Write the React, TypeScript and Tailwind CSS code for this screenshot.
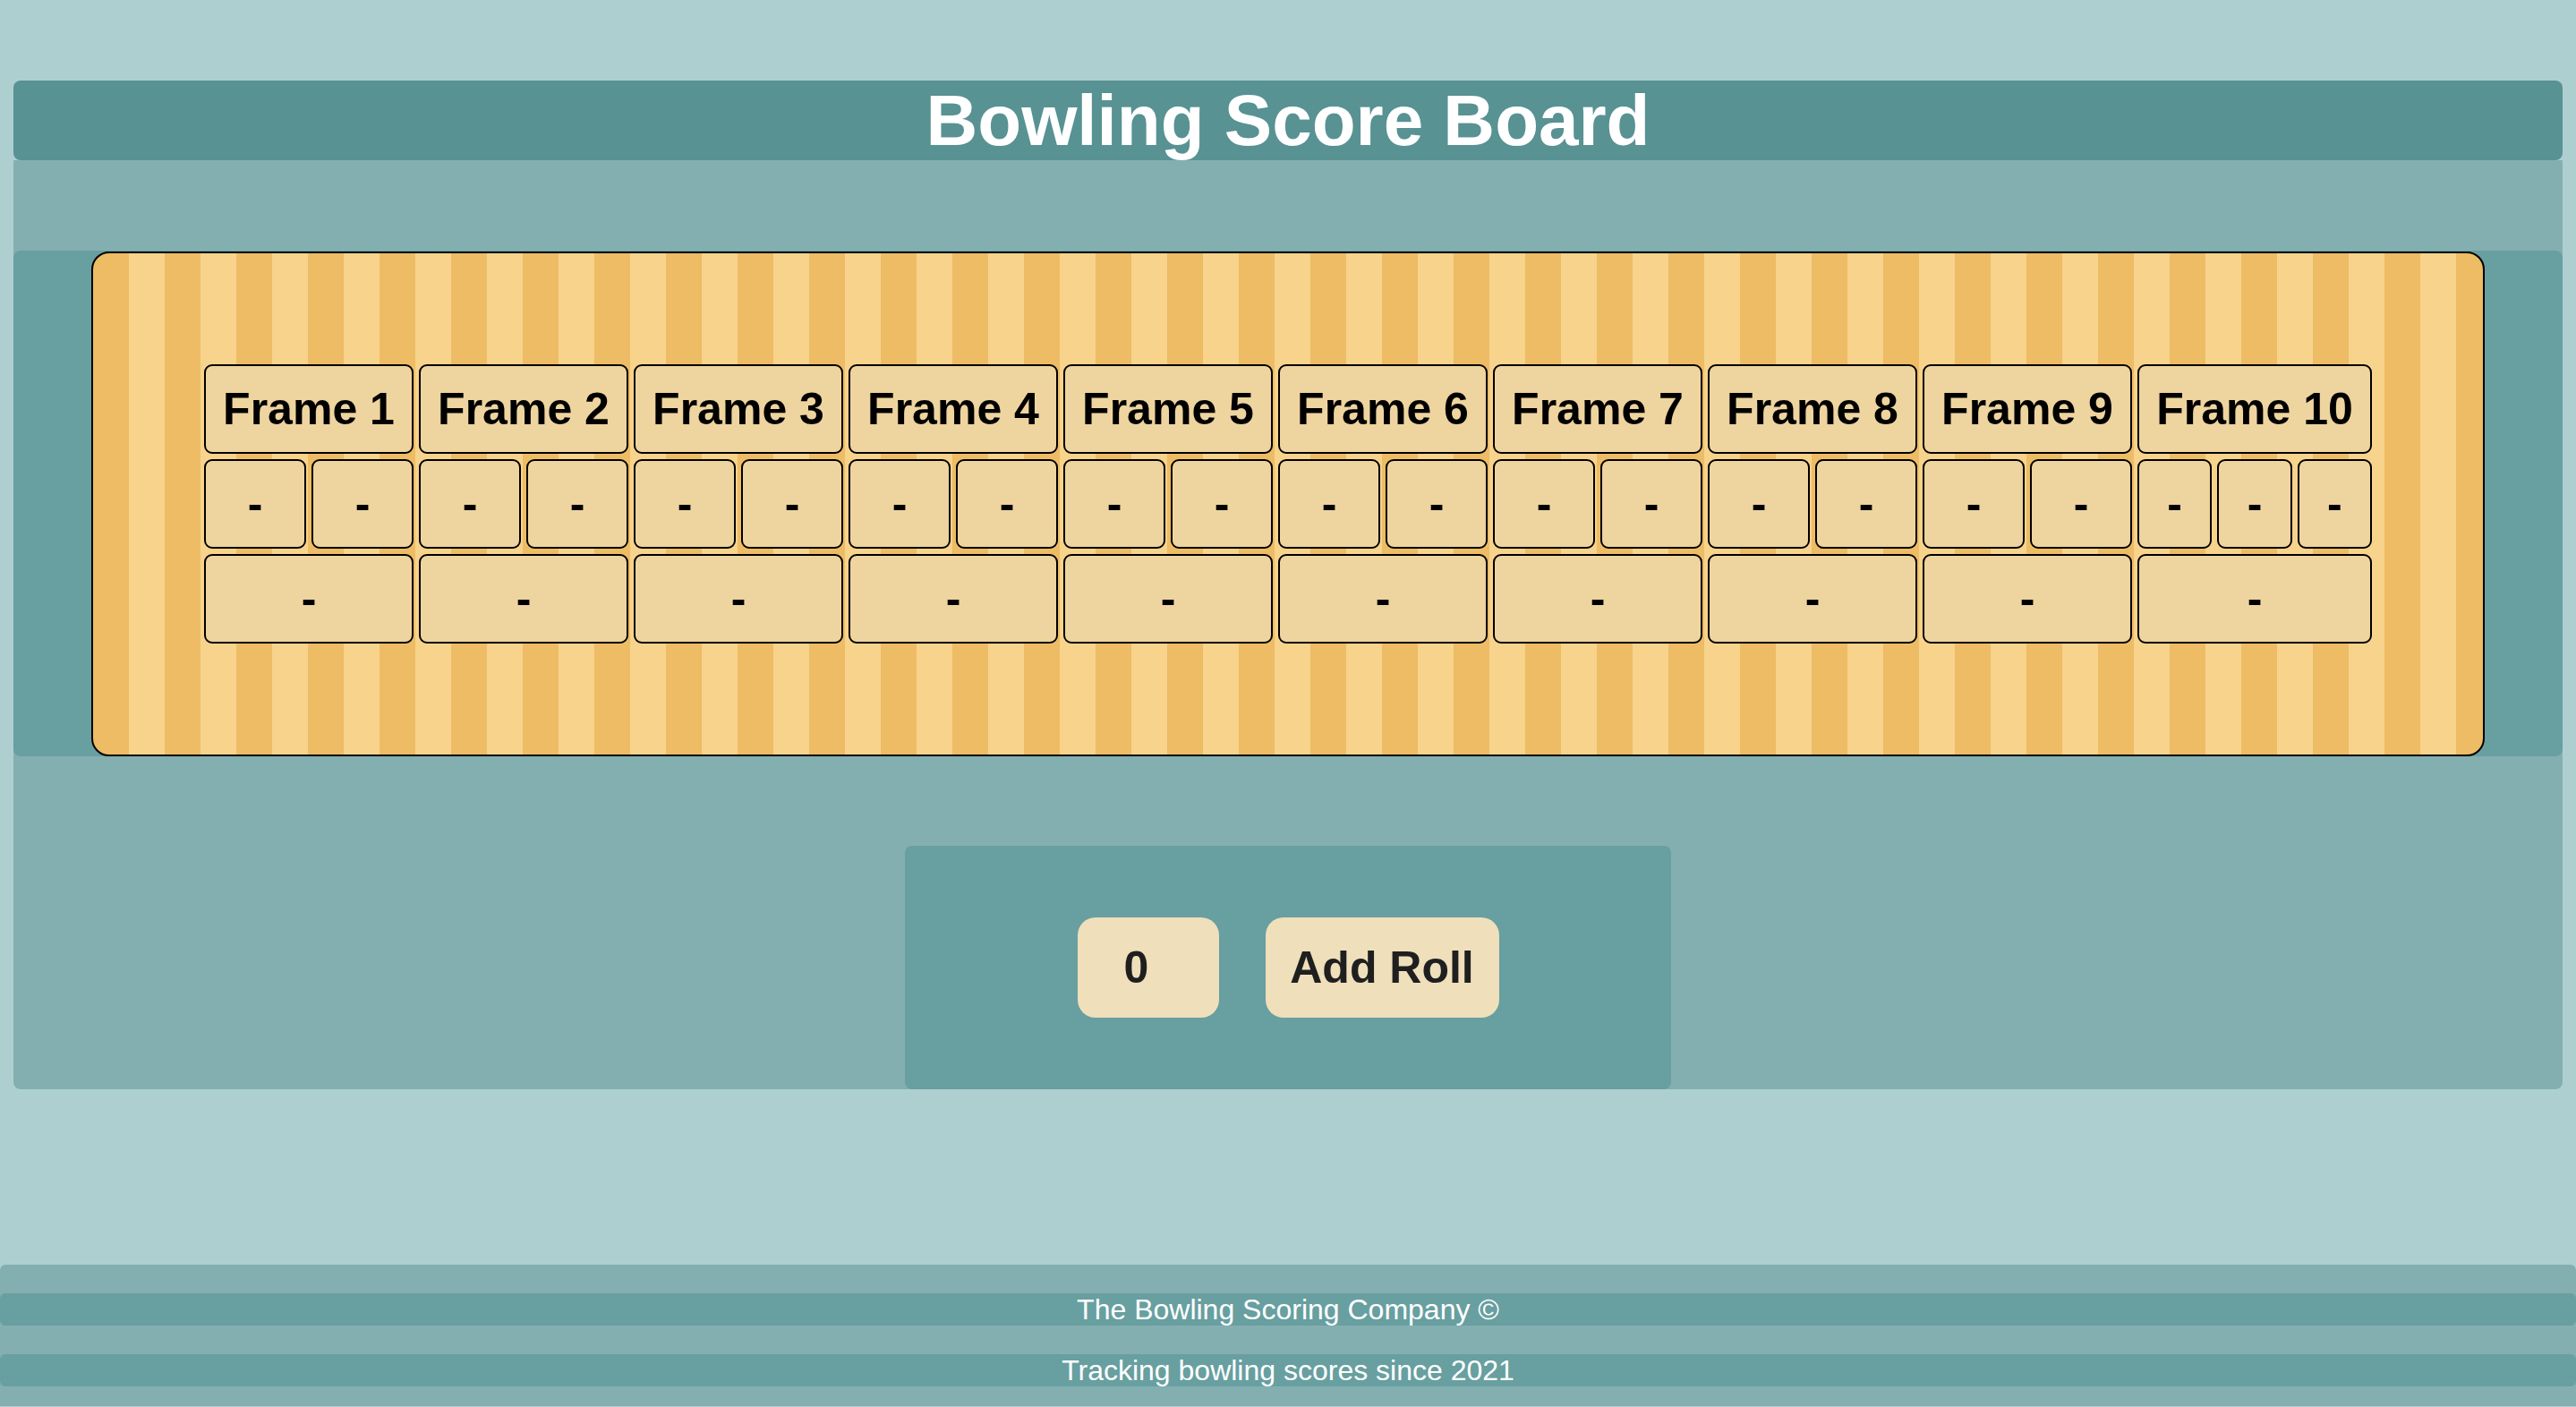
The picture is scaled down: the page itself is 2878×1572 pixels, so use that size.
import React from 'react'

const frames = Array.from({ length: 10 }, (_, i) => i + 1)

const cell =
  'flex h-[100px] items-center justify-center rounded-[9px] border-2 border-black bg-[#eed49f] text-[50px] font-bold leading-none text-black'

function Frame({ n }: { n: number }) {
  const rolls = n === 10 ? 3 : 2
  return (
    <div className={`flex flex-col gap-[6px] ${n === 10 ? 'w-[262px]' : 'w-[234px]'}`}>
      <div className={cell}>Frame {n}</div>
      <div className="flex gap-[6px]">
        {Array.from({ length: rolls }).map((_, i) => (
          <div key={i} className={`${cell} flex-1`}>
            -
          </div>
        ))}
      </div>
      <div className={cell}>-</div>
    </div>
  )
}

export default function App() {
  return (
    <div className="min-h-screen bg-[#aecfd0] pt-[90px] font-['Liberation_Sans',Arial,sans-serif]">
      <header className="mx-[15px] flex h-[89px] items-center justify-center rounded-lg bg-[#589293]">
        <h1 className="text-[80px] font-bold leading-none text-white">Bowling Score Board</h1>
      </header>

      <main className="mx-[15px] flex flex-col items-center gap-[100px] rounded-b-lg bg-[#84afb1] pt-[101px]">
        <section className="flex w-full justify-center rounded-lg bg-[#689fa0]">
          <div className="mt-[1px] rounded-[20px] border-2 border-black bg-[image:repeating-linear-gradient(90deg,#edbc65_0,#edbc65_40px,#f7d38c_40px,#f7d38c_80px)] p-[124px]">
            <div className="flex gap-[6px]">
              {frames.map((n) => (
                <Frame key={n} n={n} />
              ))}
            </div>
          </div>
        </section>

        <div className="flex w-[856px] items-center justify-center gap-[52px] rounded-lg bg-[#689fa0] py-[80px]">
          <input
            type="number"
            defaultValue={0}
            className="h-[112px] w-[158px] rounded-[20px] bg-[#efdfbb] pl-[52px] text-[50px] font-bold text-[#1f1f1f] outline-none [appearance:textfield] [&::-webkit-inner-spin-button]:appearance-none [&::-webkit-outer-spin-button]:appearance-none"
          />
          <button className="h-[112px] w-[261px] rounded-[20px] bg-[#efdfbb] text-[50px] font-bold text-[#1f1f1f]">
            Add Roll
          </button>
        </div>
      </main>

      <footer className="mt-[196px] rounded-t-md bg-[#84afb1] pt-[32px] pb-[22px] text-center text-[32px] leading-[36px] text-white">
        <p className="rounded-md bg-[#689fa0]">The Bowling Scoring Company ©</p>
        <p className="mt-[32px] rounded-md bg-[#689fa0]">Tracking bowling scores since 2021</p>
      </footer>
    </div>
  )
}
